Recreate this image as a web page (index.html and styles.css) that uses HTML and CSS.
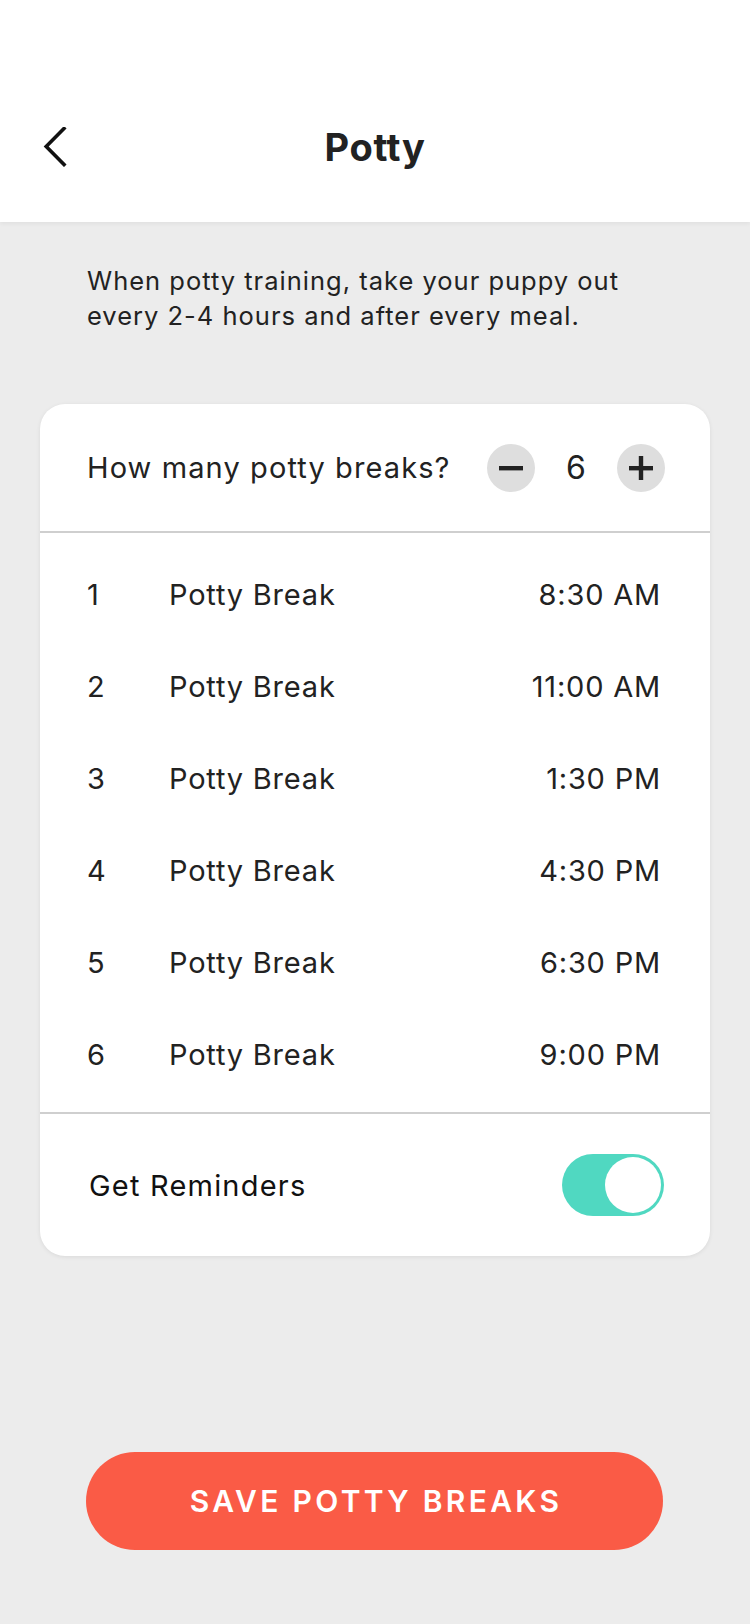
FILE: index.html
```html
<!DOCTYPE html>
<html lang="en">
<head>
<meta charset="utf-8">
<title>Potty</title>
<link rel="stylesheet" href="styles.css">
</head>
<body>
<div class="screen">
  <header class="topbar">
    <button class="back" aria-label="Back">
      <svg width="24" height="40" viewBox="0 0 24 40"><path d="M21 1.5 L3.2 19.5 L21 37.5" fill="none" stroke="#111" stroke-width="3.6" stroke-linecap="square" stroke-linejoin="miter"/></svg>
    </button>
    <h1 class="title">Potty</h1>
  </header>

  <p class="intro">When potty training, take your puppy out every 2-4 hours and after every meal.</p>

  <section class="card">
    <div class="count-row">
      <span class="count-label">How many potty breaks?</span>
      <div class="stepper">
        <span class="step-btn"><svg width="26" height="26" viewBox="0 0 26 26"><rect x="1" y="11" width="24" height="4.4" fill="#222"/></svg></span>
        <span class="count">6</span>
        <span class="step-btn"><svg width="26" height="26" viewBox="0 0 26 26"><rect x="1" y="11" width="24" height="4.4" fill="#222"/><rect x="10.8" y="1" width="4.4" height="24" fill="#222"/></svg></span>
      </div>
    </div>
    <ul class="breaks">
      <li class="break"><span class="num">1</span><span class="name">Potty Break</span><span class="time">8:30 AM</span></li>
      <li class="break"><span class="num">2</span><span class="name">Potty Break</span><span class="time">11:00 AM</span></li>
      <li class="break"><span class="num">3</span><span class="name">Potty Break</span><span class="time">1:30 PM</span></li>
      <li class="break"><span class="num">4</span><span class="name">Potty Break</span><span class="time">4:30 PM</span></li>
      <li class="break"><span class="num">5</span><span class="name">Potty Break</span><span class="time">6:30 PM</span></li>
      <li class="break"><span class="num">6</span><span class="name">Potty Break</span><span class="time">9:00 PM</span></li>
    </ul>
    <div class="remind-row">
      <span class="remind-label">Get Reminders</span>
      <span class="toggle"><span class="knob"></span></span>
    </div>
  </section>

  <button class="save">SAVE POTTY BREAKS</button>
</div>
</body>
</html>
```
FILE: styles.css
```css
* { box-sizing: border-box; }
html, body { margin: 0; padding: 0; }
body {
  background: #ececec;
  font-family: Inter, "Noto Sans", sans-serif;
  color: #222;
}
.screen {
  width: 750px;
  min-height: 1624px;
  display: flex;
  flex-direction: column;
}
.topbar {
  height: 222px;
  background: #fff;
  padding-top: 72px;
  display: flex;
  align-items: center;
  position: relative;
  box-shadow: 0 2px 4px rgba(0,0,0,0.05);
}
.back {
  border: 0;
  background: none;
  padding: 0;
  margin-left: 43px;
  width: 24px;
  height: 40px;
  display: flex;
}
.title {
  margin: 0;
  flex: 1;
  text-align: center;
  margin-right: 67px;
  font-size: 38px;
  font-weight: 700;
  letter-spacing: 0.6px;
  color: #222;
}
.intro {
  margin: 41px 0 0;
  padding: 0 80px 0 87px;
  font-size: 25.5px;
  line-height: 35px;
  color: #222;
  letter-spacing: 1px;
}
.card {
  margin: 71px 0 0 40px;
  width: 670px;
  background: #fff;
  border-radius: 25px;
  box-shadow: 0 1px 4px rgba(0,0,0,0.08);
}
.count-row {
  height: 129px;
  display: flex;
  align-items: center;
  padding: 0 45px 0 47px;
  border-bottom: 2px solid #cfcfcf;
  justify-content: space-between;
}
.count-label { font-size: 29px; letter-spacing: 1.1px; }
.stepper { display: flex; align-items: center; }
.step-btn {
  width: 48px;
  height: 48px;
  border-radius: 50%;
  background: #dedede;
  display: flex;
  align-items: center;
  justify-content: center;
}
.count {
  font-size: 32px;
  width: 82px;
  text-align: center;
}
.breaks {
  list-style: none;
  margin: 0;
  padding: 15px 49px 12px 47px;
  border-bottom: 2px solid #cfcfcf;
}
.break {
  height: 92px;
  display: flex;
  align-items: center;
  font-size: 29px;
  letter-spacing: 0.8px;
}
.num { width: 82px; }
.name { flex: 1; }
.time { text-align: right; }
.remind-row {
  height: 142px;
  display: flex;
  align-items: center;
  justify-content: space-between;
  padding: 0 46px 0 49px;
}
.remind-label { font-size: 29px; letter-spacing: 1.2px; color: #111; }
.toggle {
  width: 102px;
  height: 62px;
  border-radius: 31px;
  background: #50d8c1;
  display: flex;
  justify-content: flex-end;
  align-items: center;
  padding: 0 3px;
}
.knob {
  width: 56px;
  height: 56px;
  border-radius: 50%;
  background: #fff;
}
.save {
  margin: 196px 0 0 86px;
  width: 577px;
  height: 98px;
  border: 0;
  border-radius: 49px;
  background: #fa5b46;
  color: #fff;
  font-family: Inter, "Noto Sans", sans-serif;
  font-size: 30px;
  font-weight: 600;
  letter-spacing: 3.3px;
  padding: 0 0 0 3px;
}
```
